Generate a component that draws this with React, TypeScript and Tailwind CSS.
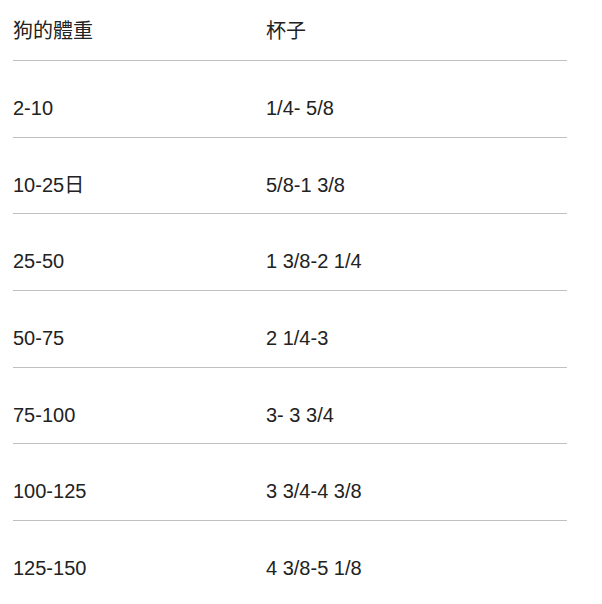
const ROWS: [string, string][] = [
  ['2-10', '1/4- 5/8'],
  ['10-25日', '5/8-1 3/8'],
  ['25-50', '1 3/8-2 1/4'],
  ['50-75', '2 1/4-3'],
  ['75-100', '3- 3 3/4'],
  ['100-125', '3 3/4-4 3/8'],
  ['125-150', '4 3/8-5 1/8'],
];

export default function App() {
  return (
    <div
      className="min-h-[604px] w-[602px] bg-white text-[20px] leading-[24px] text-[#222]"
      style={{ fontFamily: '"Liberation Sans", Arial, "Noto Sans CJK TC", sans-serif' }}
    >
      <div className="ml-[13px] w-[554px]">
        {/* 表頭 */}
        <div className="grid grid-cols-[253px_1fr] pt-[19px] pb-[17px] border-b border-[#c0c0c0]">
          <div>狗的體重</div>
          <div>杯子</div>
        </div>

        {ROWS.map(([weight, cups], i) => (
          <div
            key={weight}
            className={`grid grid-cols-[253px_1fr] pt-[35px] pb-[16.67px] ${
              i < ROWS.length - 1 ? 'border-b border-[#c0c0c0]' : ''
            }`}
          >
            <div>{weight}</div>
            <div>{cups}</div>
          </div>
        ))}
      </div>
    </div>
  );
}
